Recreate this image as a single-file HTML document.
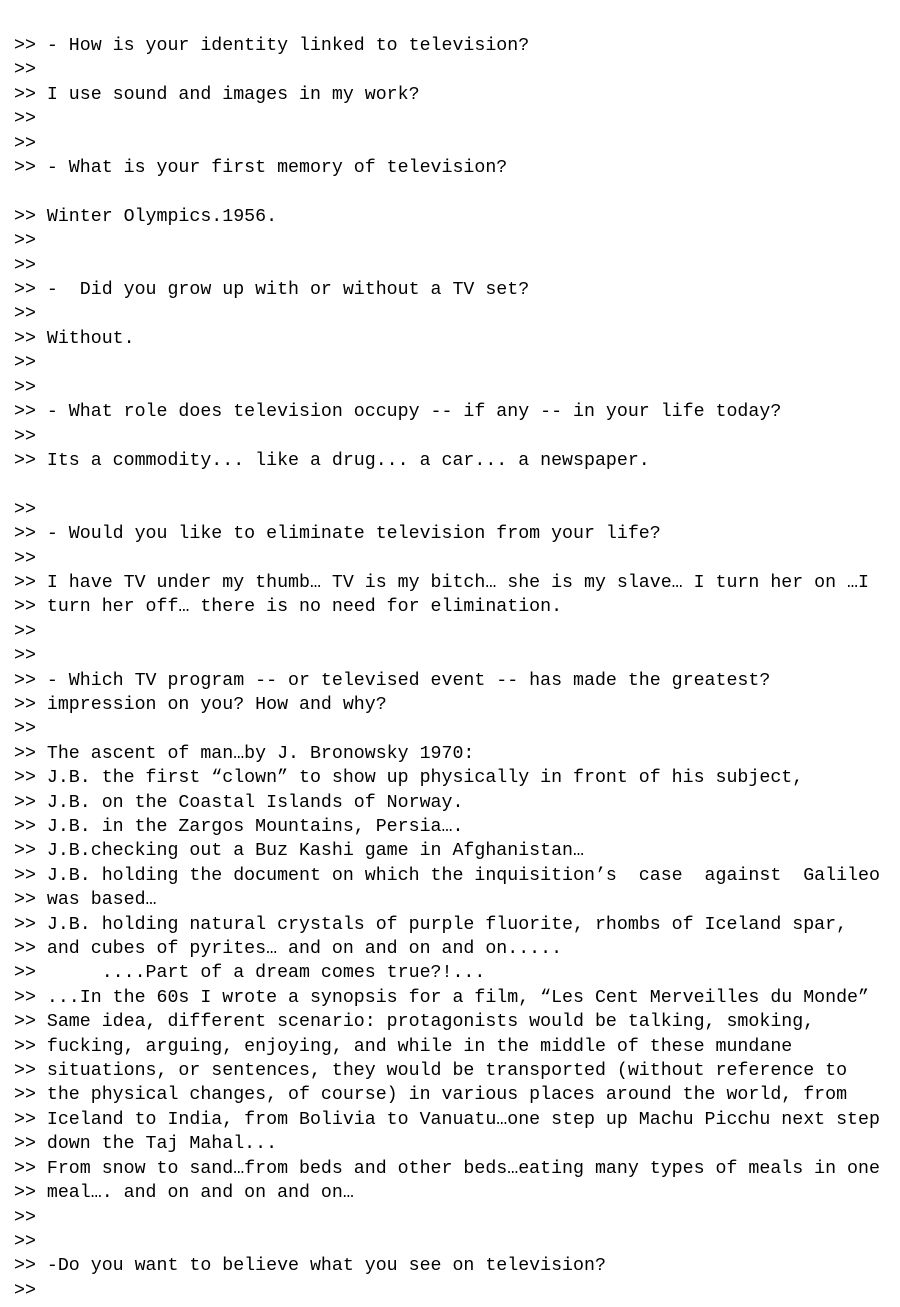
<!DOCTYPE html>
<html><head><meta charset="utf-8"><style>
html,body{margin:0;padding:0;background:#fff;}
body{width:900px;height:1307px;overflow:hidden;}
pre{margin:0;padding:34px 0 0 14px;font-family:"Liberation Mono",monospace;font-size:18.28px;line-height:24.41px;color:#000;white-space:pre;}
</style></head><body><pre>&gt;&gt; - How is your identity linked to television?
&gt;&gt;
&gt;&gt; I use sound and images in my work?
&gt;&gt;
&gt;&gt;
&gt;&gt; - What is your first memory of television?

&gt;&gt; Winter Olympics.1956.
&gt;&gt;
&gt;&gt;
&gt;&gt; -  Did you grow up with or without a TV set?
&gt;&gt;
&gt;&gt; Without.
&gt;&gt;
&gt;&gt;
&gt;&gt; - What role does television occupy -- if any -- in your life today?
&gt;&gt;
&gt;&gt; Its a commodity... like a drug... a car... a newspaper.

&gt;&gt;
&gt;&gt; - Would you like to eliminate television from your life?
&gt;&gt;
&gt;&gt; I have TV under my thumb… TV is my bitch… she is my slave… I turn her on …I
&gt;&gt; turn her off… there is no need for elimination.
&gt;&gt;
&gt;&gt;
&gt;&gt; - Which TV program -- or televised event -- has made the greatest?
&gt;&gt; impression on you? How and why?
&gt;&gt;
&gt;&gt; The ascent of man…by J. Bronowsky 1970:
&gt;&gt; J.B. the first “clown” to show up physically in front of his subject,
&gt;&gt; J.B. on the Coastal Islands of Norway.
&gt;&gt; J.B. in the Zargos Mountains, Persia….
&gt;&gt; J.B.checking out a Buz Kashi game in Afghanistan…
&gt;&gt; J.B. holding the document on which the inquisition’s  case  against  Galileo
&gt;&gt; was based…
&gt;&gt; J.B. holding natural crystals of purple fluorite, rhombs of Iceland spar,
&gt;&gt; and cubes of pyrites… and on and on and on.....
&gt;&gt;      ....Part of a dream comes true?!...
&gt;&gt; ...In the 60s I wrote a synopsis for a film, “Les Cent Merveilles du Monde”
&gt;&gt; Same idea, different scenario: protagonists would be talking, smoking,
&gt;&gt; fucking, arguing, enjoying, and while in the middle of these mundane
&gt;&gt; situations, or sentences, they would be transported (without reference to
&gt;&gt; the physical changes, of course) in various places around the world, from
&gt;&gt; Iceland to India, from Bolivia to Vanuatu…one step up Machu Picchu next step
&gt;&gt; down the Taj Mahal...
&gt;&gt; From snow to sand…from beds and other beds…eating many types of meals in one
&gt;&gt; meal…. and on and on and on…
&gt;&gt;
&gt;&gt;
&gt;&gt; -Do you want to believe what you see on television?
&gt;&gt;
</pre></body></html>
